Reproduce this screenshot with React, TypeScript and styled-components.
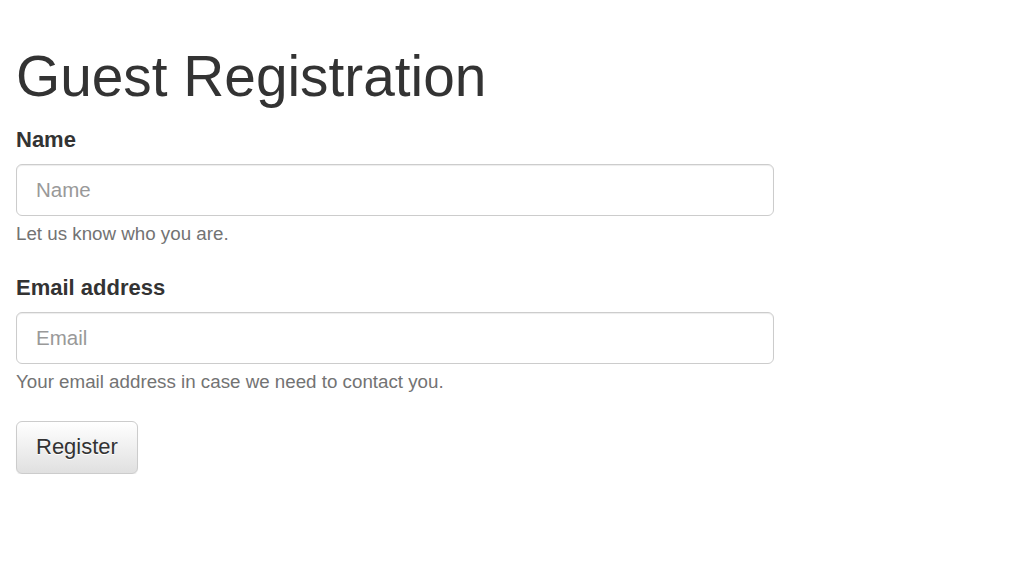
import React from "react";
import styled, { createGlobalStyle } from "styled-components";

const Global = createGlobalStyle`
  html, body { margin: 0; padding: 0; background: #fff; }
  body { font-family: "Liberation Sans", Arial, sans-serif; color: #333; }
  * { box-sizing: border-box; }
`;

const Page = styled.div`
  padding: 0 16px;
  width: 790px;
`;

const Title = styled.h1`
  margin: 46px 0 0;
  font-size: 56.8px;
  font-weight: 400;
  line-height: 1.1;
  color: #333;
`;

const Form = styled.form`
  display: flex;
  flex-direction: column;
  margin-top: 18px;
`;

const Group = styled.div<{ $last?: boolean }>`
  display: flex;
  flex-direction: column;
  margin-bottom: ${(p) => (p.$last ? 25 : 26)}px;
`;

const Label = styled.label`
  font-size: 22px;
  font-weight: 700;
  line-height: 28px;
  margin-bottom: 10px;
`;

const Input = styled.input`
  width: 100%;
  height: 52px;
  padding: 10px 19px;
  font-family: inherit;
  font-size: 20.5px;
  color: #555;
  border: 1px solid #ccc;
  border-radius: 6px;
  box-shadow: inset 0 1px 1px rgba(0, 0, 0, 0.075);
  outline: none;
  &::placeholder { color: #999; }
`;

const Help = styled.span`
  margin-top: 5px;
  font-size: 18.75px;
  line-height: 26.6px;
  color: #737373;
`;

const Button = styled.button`
  align-self: flex-start;
  height: 53px;
  padding: 0 19px;
  font-family: inherit;
  font-size: 22px;
  color: #333;
  background: linear-gradient(to bottom, #fff 0%, #e0e0e0 100%);
  border: 1px solid #ccc;
  border-radius: 6px;
  box-shadow: inset 0 1px 0 rgba(255, 255, 255, 0.15), 0 1px 1px rgba(0, 0, 0, 0.075);
  text-shadow: 0 1px 0 #fff;
  cursor: pointer;
`;

export default function App() {
  return (
    <>
      <Global />
      <Page>
        <Title>Guest Registration</Title>
        <Form onSubmit={(e) => e.preventDefault()}>
          <Group>
            <Label htmlFor="name">Name</Label>
            <Input id="name" type="text" placeholder="Name" />
            <Help>Let us know who you are.</Help>
          </Group>
          <Group $last>
            <Label htmlFor="email">Email address</Label>
            <Input id="email" type="email" placeholder="Email" />
            <Help>Your email address in case we need to contact you.</Help>
          </Group>
          <Button type="submit">Register</Button>
        </Form>
      </Page>
    </>
  );
}
